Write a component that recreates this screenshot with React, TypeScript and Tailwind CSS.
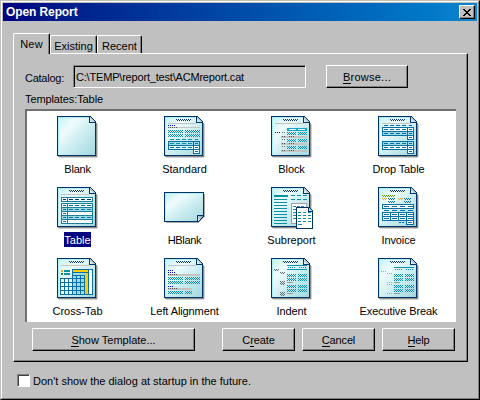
import React from "react";

const NAVY = "#003366";
const TEAL = "#0a8fa8";
const BLUE = "#0670a5";
const GRAY = "#c3c3c3";
const TINT = "#9fdce4";

type BoxProps = { x: number; y: number; w: number; h?: number; c: string };

function R({ x, y, w, h = 1, c }: BoxProps) {
  return <rect x={x} y={y} width={w} height={h} fill={c} />;
}

/* Checkerboard fill made of single pixels */
function Dither({ x, y, w, h = 3, c }: BoxProps) {
  let d = "";
  for (let j = 0; j < h; j++)
    for (let i = j % 2; i < w; i += 2) d += `M${x + i} ${y + j}h1v1h-1z`;
  return <path d={d} fill={c} />;
}

/* Repeated short strokes */
function Dashes({ x, y, n, len, gap, c }: { x: number; y: number; n: number; len: number; gap: number; c: string }) {
  let d = "";
  for (let i = 0; i < n; i++) d += `M${x + i * (len + gap)} ${y}h${len}v1h-${len}z`;
  return <path d={d} fill={c} />;
}

function Frame({ x, y, w, h, c = BLUE, fill = "#fff" }: { x: number; y: number; w: number; h: number; c?: string; fill?: string }) {
  return (
    <g>
      <R x={x} y={y} w={w} h={h} c={c} />
      <R x={x + 1} y={y + 1} w={w - 2} h={h - 2} c={fill} />
    </g>
  );
}

function Sheet() {
  return (
    <g>
      <R x={2} y={41} w={38} c="#d0d0d0" />
      <R x={40} y={8} w={1} h={33} c="#d0d0d0" />
      <R x={1} y={40} w={39} c="#8c8c8c" />
      <R x={39} y={7} w={1} h={34} c="#8c8c8c" />
      <path d="M0 0H33L39 6V40H0Z" fill={NAVY} />
      <path d="M1 1H32V7H38V39H1Z" fill="url(#paper)" />
      <R x={1} y={1} w={31} c="#a9eff4" />
      <R x={1} y={1} w={1} h={38} c="#a9eff4" />
      <path d="M33 1h1v1h1v1h1v1h1v1h1v1h-5z" fill="url(#fold)" />
    </g>
  );
}

function Header({ line = true }: { line?: boolean }) {
  return (
    <g>
      <Dither x={12} y={3} w={15} h={2} c="#0a2f7d" />
      {line && <R x={4} y={7} w={28} c={GRAY} />}
    </g>
  );
}

function GrayRow({ x, y, w, n = 3 }: { x: number; y: number; w: number; n?: number }) {
  return (
    <g>
      <R x={x} y={y} w={w} h={2} c={GRAY} />
      <Dashes x={x} y={y} n={n} len={1} gap={1} c="#555" />
    </g>
  );
}

function Standard() {
  return (
    <g>
      <Header />
      <Dashes x={4} y={9} n={4} len={1} gap={1} c="#0000ff" />
      <R x={4} y={11} w={32} c={GRAY} />
      <Dashes x={4} y={11} n={5} len={1} gap={1} c="#555" />
      {[14, 18].map((y) => (
        <g key={y}>
          <Dither x={4} y={y} w={15} c={TEAL} />
          <Dither x={21} y={y} w={15} c={TEAL} />
        </g>
      ))}
      <Dashes x={6} y={23} n={4} len={4} gap={2} c={TEAL} />
      <R x={31} y={23} w={3} c={TEAL} />
      <Frame x={4} y={25} w={32} h={5} fill={TINT} />
      <Frame x={4} y={29} w={32} h={5} fill="#eaffff" />
      <Frame x={29} y={25} w={7} h={5} fill={TINT} />
      <Frame x={29} y={29} w={7} h={5} />
      <Frame x={29} y={33} w={7} h={5} />
      <Dashes x={6} y={27} n={4} len={4} gap={2} c={TEAL} />
      <Dashes x={6} y={31} n={4} len={4} gap={2} c={BLUE} />
      {[27, 31, 35].map((y) => <R key={y} x={31} y={y} w={3} c={BLUE} />)}
    </g>
  );
}

function Block() {
  return (
    <g>
      <Header />
      <R x={16} y={12} w={20} h={3} c="#10a5c2" />
      <R x={18} y={13} w={7} c="#fff" />
      <R x={27} y={13} w={7} c="#fff" />
      <Dashes x={4} y={16} n={3} len={1} gap={1} c="#0000ff" />
      {[16, 23, 30].map((y) => (
        <g key={y}>
          <Dashes x={11} y={y} n={2} len={1} gap={1} c="#666" />
          <Dither x={16} y={y} w={9} c={TEAL} />
          <Dither x={27} y={y} w={9} c={TEAL} />
          <R x={10} y={y + 4} w={26} h={2} c={GRAY} />
          <Dashes x={11} y={y + 4} n={2} len={1} gap={1} c="#555" />
          <Dashes x={18} y={y + 4} n={3} len={1} gap={1} c="#555" />
        </g>
      ))}
    </g>
  );
}

function DropHalf({ y, first, second }: { y: number; first: string; second: string }) {
  return (
    <g>
      <Frame x={4} y={y} w={32} h={5} fill={first} />
      <Frame x={4} y={y + 4} w={32} h={5} fill={second} />
      <Frame x={29} y={y} w={7} h={5} fill={first} />
      <Frame x={29} y={y + 4} w={7} h={5} fill={second} />
      <Frame x={29} y={y + 8} w={7} h={5} />
      <Dashes x={6} y={y + 2} n={4} len={4} gap={2} c={BLUE} />
      <Dashes x={6} y={y + 6} n={4} len={4} gap={2} c={BLUE} />
      {[2, 6, 10].map((o) => <R key={o} x={31} y={y + o} w={3} c={BLUE} />)}
    </g>
  );
}

function DropTable() {
  return (
    <g>
      <Header />
      <Dashes x={6} y={9} n={4} len={4} gap={2} c={BLUE} />
      <R x={31} y={9} w={3} c={BLUE} />
      <DropHalf y={11} first="#fff" second={TINT} />
      <DropHalf y={25} first={TINT} second="#fff" />
    </g>
  );
}

function TableIcon() {
  return (
    <g>
      <Header />
      <Frame x={4} y={10} w={32} h={5} c="#177f99" />
      <R x={10} y={10} w={1} h={5} c="#177f99" />
      <R x={6} y={12} w={3} c={NAVY} />
      <Dashes x={12} y={12} n={4} len={4} gap={2} c={NAVY} />
      {[0, 1, 2, 3, 4].map((i) => (
        <g key={i}>
          <Frame x={4} y={16 + i * 4} w={32} h={5} c="#177f99" fill={i % 2 ? TINT : "#fff"} />
          <R x={10} y={16 + i * 4} w={1} h={5} c="#177f99" />
          <R x={6} y={18 + i * 4} w={3} c={BLUE} />
          {i !== 2 && i !== 4 && <Dashes x={12} y={18 + i * 4} n={4} len={4} gap={2} c={BLUE} />}
        </g>
      ))}
    </g>
  );
}

function Subreport() {
  return (
    <g>
      <Header line={false} />
      <R x={3} y={8} w={14} h={2} c={TEAL} />
      <Dashes x={20} y={8} n={3} len={4} gap={2} c={TEAL} />
      <Dashes x={20} y={12} n={3} len={4} gap={2} c={TEAL} />
      {[12, 15, 18, 21, 24, 27, 30, 33, 36].map((y) => <R key={y} x={3} y={y} w={13} c={TEAL} />)}
      <Frame x={20} y={16} w={16} h={21} c="#a0a0a0" />
      {[19, 22, 25, 28, 31].map((y) => <Dashes key={y} x={22} y={y} n={3} len={3} gap={1} c={TEAL} />)}
      <path d="M25 20h13l4 4v18h-17z" fill={NAVY} />
      <path d="M26 21h11v4h4v16h-15z" fill="#fff" />
      <path d="M38 21h1v1h1v1h1v1h-3z" fill="#b8d6e0" />
      {[25, 28, 31, 34].map((y) => <Dashes key={y} x={27} y={y} n={3} len={3} gap={2} c={TEAL} />)}
      <R x={27} y={37} w={4} c={TEAL} />
    </g>
  );
}

function Invoice() {
  return (
    <g>
      <Header line={false} />
      <Dither x={4} y={8} w={13} h={2} c="#5a9e00" />
      <Dither x={4} y={11} w={5} h={2} c="#f5a11a" />
      <Dither x={10} y={11} w={7} h={2} c={BLUE} />
      <Dither x={10} y={14} w={7} h={2} c={BLUE} />
      <Dither x={20} y={11} w={5} h={2} c="#f5a11a" />
      <Dither x={26} y={11} w={7} h={2} c={BLUE} />
      <Dither x={26} y={14} w={7} h={2} c={BLUE} />
      <Frame x={4} y={17} w={32} h={5} />
      <Dashes x={6} y={19} n={4} len={5} gap={3} c={BLUE} />
      <Dashes x={6} y={23} n={4} len={5} gap={3} c={BLUE} />
      {[25, 29].map((y) => (
        <g key={y}>
          <Frame x={4} y={y} w={32} h={5} />
          {[12, 20, 28].map((x) => <R key={x} x={x} y={y} w={1} h={5} c={BLUE} />)}
          <Dashes x={6} y={y + 2} n={4} len={5} gap={3} c={BLUE} />
        </g>
      ))}
      <Frame x={28} y={33} w={8} h={5} />
      <R x={30} y={35} w={4} c={BLUE} />
      <Dashes x={21} y={35} n={2} len={2} gap={1} c={BLUE} />
    </g>
  );
}

function CrossTab() {
  return (
    <g>
      <Header />
      <R x={4} y={12} w={2} h={2} c="#f5a11a" />
      <R x={7} y={12} w={6} h={2} c={TEAL} />
      <R x={4} y={15} w={2} h={2} c="#0f8f1c" />
      <R x={7} y={15} w={6} h={2} c={TEAL} />
      <R x={3} y={20} w={33} h={17} c="#fff" />
      <R x={15} y={11} w={21} h={10} c="#fff" />
      <R x={15} y={12} w={16} h={2} c="#ffcc00" />
      <R x={15} y={15} w={13} h={22} c={TINT} />
      <R x={7} y={25} w={9} h={12} c="#dff6f8" />
      <R x={28} y={12} w={3} h={25} c="#ffcc00" />
      {[11, 14, 17].map((y) => <R key={y} x={15} y={y} w={y === 17 ? 13 : 17} c={BLUE} />)}
      <R x={15} y={11} w={21} c={BLUE} />
      {[20, 24, 28, 32, 36].map((y) => <R key={y} x={3} y={y} w={y === 36 ? 33 : 28} c={BLUE} />)}
      {[3, 7, 11].map((x) => <R key={x} x={x} y={20} w={1} h={17} c={BLUE} />)}
      {[15, 31, 35].map((x) => <R key={x} x={x} y={11} w={1} h={26} c={BLUE} />)}
      {[19, 23, 27].map((x) => <R key={x} x={x} y={17} w={1} h={20} c={BLUE} />)}
      <R x={28} y={15} w={3} h={21} c="#ffcc00" />
    </g>
  );
}

function LeftAlignment() {
  return (
    <g>
      <Header />
      <Dashes x={4} y={12} n={3} len={1} gap={1} c="#0000ff" />
      <Dashes x={4} y={14} n={4} len={1} gap={1} c="#0000ff" />
      <GrayRow x={4} y={16} w={32} n={5} />
      {[19, 23].map((y) => (
        <g key={y}>
          <Dither x={4} y={y} w={15} c={TEAL} />
          <Dither x={21} y={y} w={15} c={TEAL} />
        </g>
      ))}
      <Dashes x={4} y={28} n={3} len={1} gap={1} c="#0000ff" />
      <GrayRow x={4} y={30} w={24} n={5} />
      <Dither x={4} y={33} w={15} c={TEAL} />
      <Dither x={21} y={33} w={7} c={TEAL} />
    </g>
  );
}

function IndentBody({ dotsY }: { dotsY: number }) {
  return (
    <g>
      {[16, 20, 27, 31].map((y) => (
        <g key={y}>
          <Dither x={16} y={y} w={9} c={TEAL} />
          <Dither x={27} y={y} w={9} c={TEAL} />
        </g>
      ))}
      <R x={16} y={24} w={6} c="#909c9c" />
      <R x={16} y={35} w={6} c="#909c9c" />
      <Dashes x={17} y={dotsY} n={4} len={1} gap={1} c={TEAL} />
      <Dashes x={28} y={dotsY} n={4} len={1} gap={1} c={TEAL} />
    </g>
  );
}

function Indent() {
  return (
    <g>
      <Header line={false} />
      <R x={16} y={7} w={20} c={TEAL} />
      <R x={16} y={11} w={20} c={TEAL} />
      <IndentBody dotsY={9} />
      <Dither x={3} y={11} w={5} h={2} c="#666" />
      <Dither x={9} y={14} w={5} h={2} c="#666" />
      <Dither x={9} y={23} w={5} h={4} c="#666" />
      <Dither x={9} y={34} w={5} h={4} c="#666" />
    </g>
  );
}

function ExecutiveBreak() {
  return (
    <g>
      <Header line={false} />
      <R x={16} y={9} w={20} c={TEAL} />
      <IndentBody dotsY={11} />
      <Dashes x={3} y={13} n={3} len={1} gap={1} c="#f59a00" />
      <Dashes x={9} y={15} n={3} len={1} gap={1} c="#f59a00" />
      <Dashes x={9} y={24} n={3} len={1} gap={1} c="#f59a00" />
      <Dashes x={9} y={26} n={3} len={1} gap={1} c="#f59a00" />
      <Dashes x={9} y={35} n={3} len={1} gap={1} c="#f59a00" />
    </g>
  );
}

function HBlank() {
  return (
    <g transform="translate(0 5)">
      <path d="M40 2h1v22l-7 7H2v-1h32l6-6z" fill="#a8a8a8" />
      <path d="M0 0H40V24L34 30H0Z" fill={NAVY} />
      <path d="M1 1H39V23H33V29H1Z" fill="url(#paper)" />
      <path d="M34 24h5v1h-1v1h-1v1h-1v1h-1v1h-1z" fill="url(#fold)" />
      <R x={1} y={1} w={38} c="#a9eff4" />
      <R x={1} y={1} w={1} h={28} c="#a9eff4" />
    </g>
  );
}

const templates: { name: string; art?: React.ReactNode; bare?: boolean; tracking: string; selected?: boolean }[] = [
  { name: "Blank", tracking: "tracking-[-0.25px]" },
  { name: "Standard", art: <Standard />, tracking: "tracking-normal" },
  { name: "Block", art: <Block />, tracking: "tracking-[-0.1px]" },
  { name: "Drop Table", art: <DropTable />, tracking: "tracking-[-0.1px]" },
  { name: "Table", art: <TableIcon />, tracking: "tracking-normal", selected: true },
  { name: "HBlank", art: <HBlank />, bare: true, tracking: "tracking-[-0.3px]" },
  { name: "Subreport", art: <Subreport />, tracking: "tracking-normal" },
  { name: "Invoice", art: <Invoice />, tracking: "tracking-[-0.1px]" },
  { name: "Cross-Tab", art: <CrossTab />, tracking: "tracking-normal" },
  { name: "Left Alignment", art: <LeftAlignment />, tracking: "tracking-[-0.1px]" },
  { name: "Indent", art: <Indent />, tracking: "tracking-[-0.1px]" },
  { name: "Executive Break", art: <ExecutiveBreak />, tracking: "tracking-[-0.1px]" },
];

function Button({ pre = "", hot, rest, className }: { pre?: string; hot: string; rest: string; className: string }) {
  return (
    <button
      className={`flex h-[23px] items-center justify-center whitespace-pre border border-t-white border-l-white border-r-black border-b-black pt-px shadow-[inset_-1px_-1px_0_#808080] ${className}`}
    >
      <span>
        {pre}
        <span className="border-b border-black">{hot}</span>
        {rest}
      </span>
    </button>
  );
}

export default function App() {
  return (
    <div className="h-[400px] w-[480px] overflow-hidden border border-t-[#c0c0c0] border-l-[#c0c0c0] border-r-black border-b-black bg-[#c0c0c0] font-['Liberation_Sans',Arial,sans-serif] text-[11px] leading-[13px] text-black">
      <div className="flex h-full flex-col border border-t-white border-l-white border-r-[#808080] border-b-[#808080] p-px">
        <div className="flex h-[18px] shrink-0 items-center justify-between bg-linear-to-r from-[#000080] to-[#1084d0] pr-[2px] pl-[3px]">
          <span className="text-[12px] font-bold tracking-[-0.1px] text-white">Open Report</span>
          <button className="flex h-[14px] w-4 items-center justify-center border border-t-white border-l-white border-r-black border-b-black bg-[#c0c0c0] shadow-[inset_-1px_-1px_0_#808080]">
            <svg width="8" height="7" viewBox="0 0 8 7" shapeRendering="crispEdges">
              <path d="M0 0h2v1h1v1h2v-1h1v-1h2v1h-1v1h-1v1h-1v1h1v1h1v1h1v1h-2v-1h-1v-1h-2v1h-1v1h-2v-1h1v-1h1v-1h1v-1h-1v-1h-1v-1h-1z" />
            </svg>
          </button>
        </div>

        <div className="mt-3 ml-[10px] flex h-5 items-end">
          <div className="relative z-10 -mb-px flex h-[21px] w-[37px] items-start justify-center rounded-t-[2px] border border-b-0 border-t-white border-l-white border-r-black bg-[#c0c0c0] pt-1 tracking-[0.2px] shadow-[inset_-1px_0_0_#808080]">New</div>
          <div className="flex h-[18px] w-[47px] items-start justify-center rounded-t-[2px] border border-b-0 border-t-white border-l-white border-r-black pt-1 shadow-[inset_-1px_0_0_#808080]">Existing</div>
          <div className="flex h-[18px] w-[45px] items-start justify-center rounded-t-[2px] border border-b-0 border-t-white border-l-white border-r-black pt-1 shadow-[inset_-1px_0_0_#808080]">Recent</div>
        </div>

        <div className="ml-[10px] flex h-[309px] w-[455px] flex-col border border-t-white border-l-white border-r-black border-b-black pl-[11px] shadow-[inset_-1px_-1px_0_#808080]">
          <div className="mt-[11px] flex h-[23px] items-center">
            <span className="w-12 pt-[3px] tracking-[-0.25px]">Catalog:</span>
            <div className="flex h-[23px] w-[233px] items-center border border-t-[#808080] border-l-[#808080] border-r-white border-b-white pt-px pl-[2px] tracking-[-0.19px] shadow-[inset_1px_1px_0_#000]">
              C:\TEMP\report_test\ACMreport.cat
            </div>
            <Button hot="B" rest="rowse..." className="ml-5 w-[82px] tracking-[0.25px]" />
          </div>
          <div className="mt-[5px] h-4 tracking-[-0.1px]">Templates:Table</div>

          <div className="h-[213px] w-[431px] border-t-2 border-l-2 border-t-[#707070] border-l-[#707070] bg-white pt-[5px]">
            <div className="-ml-[3px] grid w-[428px] grid-cols-[repeat(4,107px)] auto-rows-[71px]">
              {templates.map((t) => (
                <div key={t.name} className="flex flex-col items-center">
                  <svg width="43" height="43" viewBox="-1 0 43 43" className="shrink-0" shapeRendering="crispEdges">
                    <defs>
                      <linearGradient id="paper" x1="0" y1="0" x2="1" y2="1">
                        <stop offset="0" stopColor="#c3f1f4" />
                        <stop offset=".28" stopColor="#effcfc" />
                        <stop offset=".55" stopColor="#cdeef1" />
                        <stop offset="1" stopColor="#a2d8df" />
                      </linearGradient>
                      <linearGradient id="fold" x1="0" y1="1" x2="1" y2="0">
                        <stop offset="0" stopColor="#ffffff" />
                        <stop offset="1" stopColor="#5f8fa8" />
                      </linearGradient>
                    </defs>
                    {!t.bare && <Sheet />}
                    {t.art}
                  </svg>
                  <span
                    className={`mt-[2px] h-[15px] whitespace-nowrap pt-[2px] ${t.tracking} ${t.selected ? "bg-[#000080] text-white" : ""}`}
                  >
                    {t.name}
                  </span>
                </div>
              ))}
            </div>
          </div>

          <div className="mt-[6px] ml-[7px] flex">
            <Button hot="S" rest="how Template..." className="w-[163px]" />
            <Button pre="C" hot="r" rest="eate" className="ml-[27px] w-[73px] tracking-[-0.1px]" />
            <Button hot="C" rest="ancel" className="ml-[7px] w-[73px] tracking-[-0.15px]" />
            <Button hot="H" rest="elp" className="ml-[7px] w-[73px] tracking-[-0.2px]" />
          </div>
        </div>

        <label className="mt-[12px] ml-[14px] flex items-center">
          <span className="size-[13px] border border-t-[#808080] border-l-[#808080] border-r-white border-b-white bg-white shadow-[inset_1px_1px_0_#404040]" />
          <span className="h-[13px] pt-px pl-[3px]">Don't show the dialog at startup in the future.</span>
        </label>
      </div>
    </div>
  );
}
